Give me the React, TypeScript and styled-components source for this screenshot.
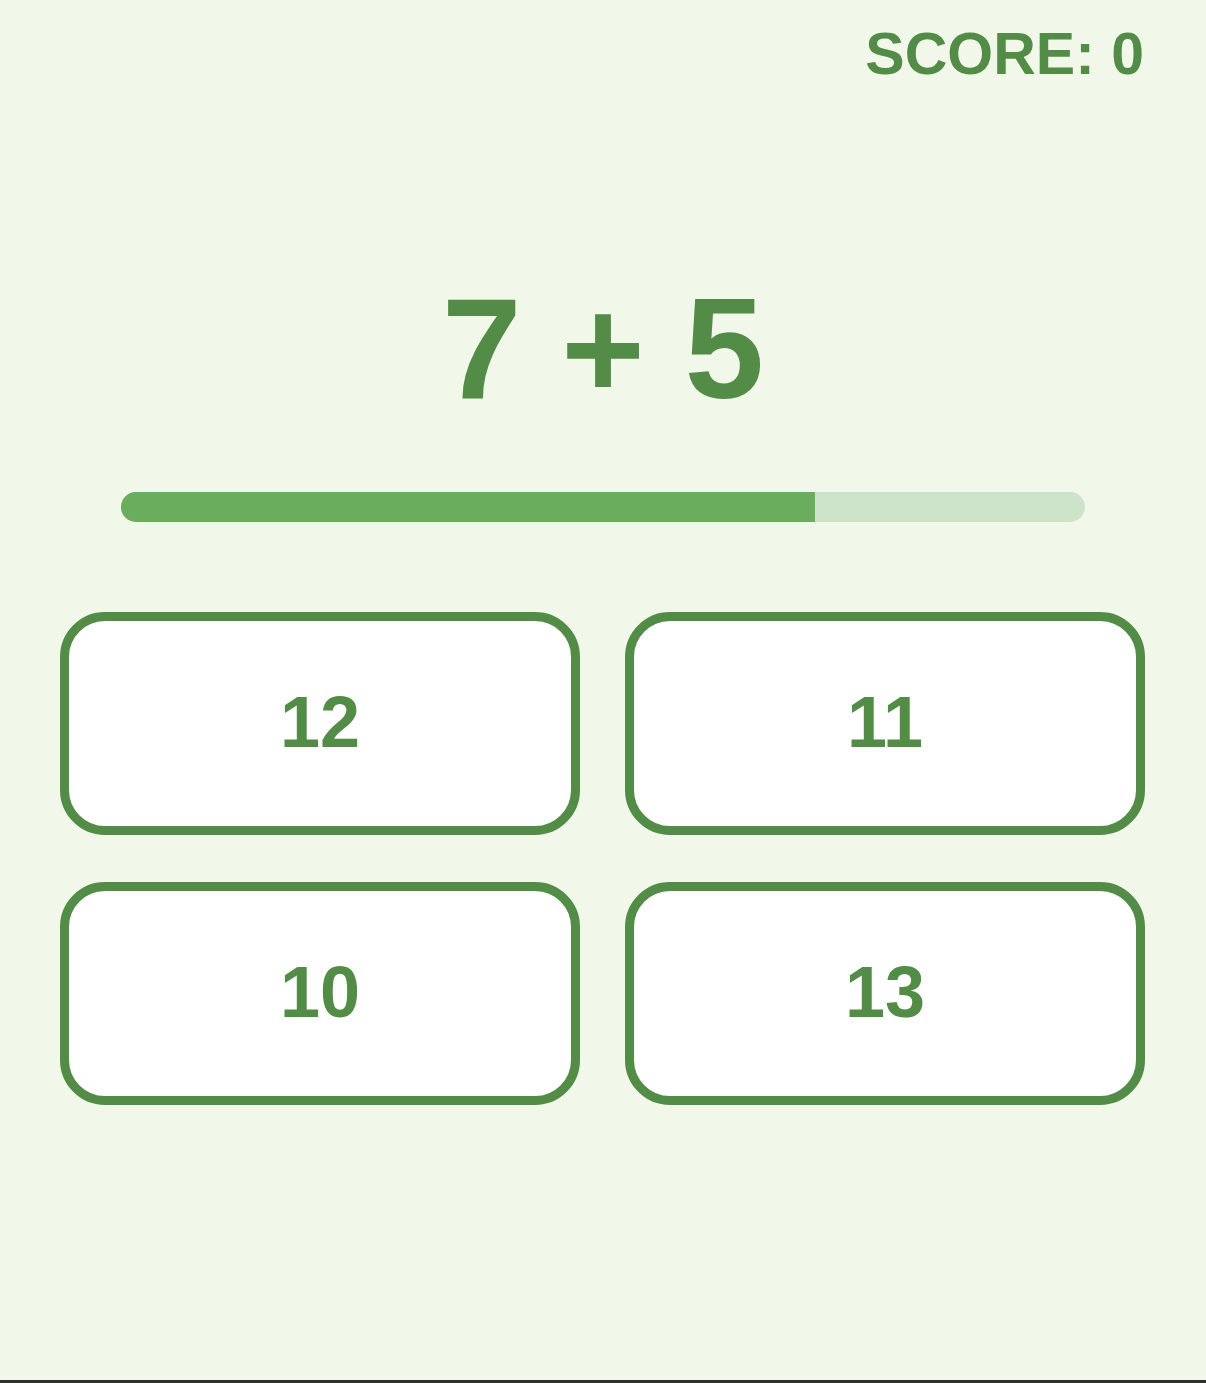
import React, { useState } from "react";
import styled, { createGlobalStyle } from "styled-components";

const GlobalStyle = createGlobalStyle`
  html, body {
    margin: 0;
    padding: 0;
    background: #f1f8e9;
  }
  * {
    box-sizing: border-box;
  }
`;

const Screen = styled.div`
  min-height: 100vh;
  background: #f1f8e9;
  font-family: "Liberation Sans", Arial, sans-serif;
  color: #528c46;
  display: flex;
  flex-direction: column;
  padding: 20px 60px 0;
  border-bottom: 3px solid #2f2f2d;
`;

const ScoreLine = styled.div`
  align-self: flex-end;
  font-size: 59px;
  font-weight: 700;
  line-height: 69px;
  margin-right: 2px;
`;

const Question = styled.div`
  margin-top: 177px;
  text-align: center;
  font-size: 143px;
  font-weight: 700;
  line-height: 166px;
`;

const Track = styled.div`
  align-self: center;
  width: 964px;
  height: 30px;
  margin-top: 60px;
  border-radius: 15px;
  background: #cde4cb;
  overflow: hidden;
`;

const Fill = styled.div`
  height: 100%;
  background: #6aad5c;
`;

const Choices = styled.div`
  display: grid;
  grid-template-columns: 520px 520px;
  column-gap: 45px;
  row-gap: 47px;
  margin-top: 90px;
`;

const Choice = styled.button`
  height: 223px;
  border: 9px solid #528c46;
  border-radius: 45px;
  background: #ffffff;
  color: #528c46;
  font-family: "Liberation Sans", Arial, sans-serif;
  font-size: 72px;
  font-weight: 700;
  display: flex;
  align-items: center;
  justify-content: center;
  cursor: pointer;
  padding: 0 0 4px;
`;

const App: React.FC = () => {
  const [score, setScore] = useState(0);
  const timeLeft = 0.72;
  const answers = [12, 11, 10, 13];

  return (
    <>
      <GlobalStyle />
      <Screen>
        <ScoreLine>SCORE: {score}</ScoreLine>
        <Question>7 + 5</Question>
        <Track>
          <Fill style={{ width: `${timeLeft * 100}%` }} />
        </Track>
        <Choices>
          {answers.map((n) => (
            <Choice key={n} onClick={() => n === 12 && setScore(score + 1)}>
              {n}
            </Choice>
          ))}
        </Choices>
      </Screen>
    </>
  );
};

export default App;
